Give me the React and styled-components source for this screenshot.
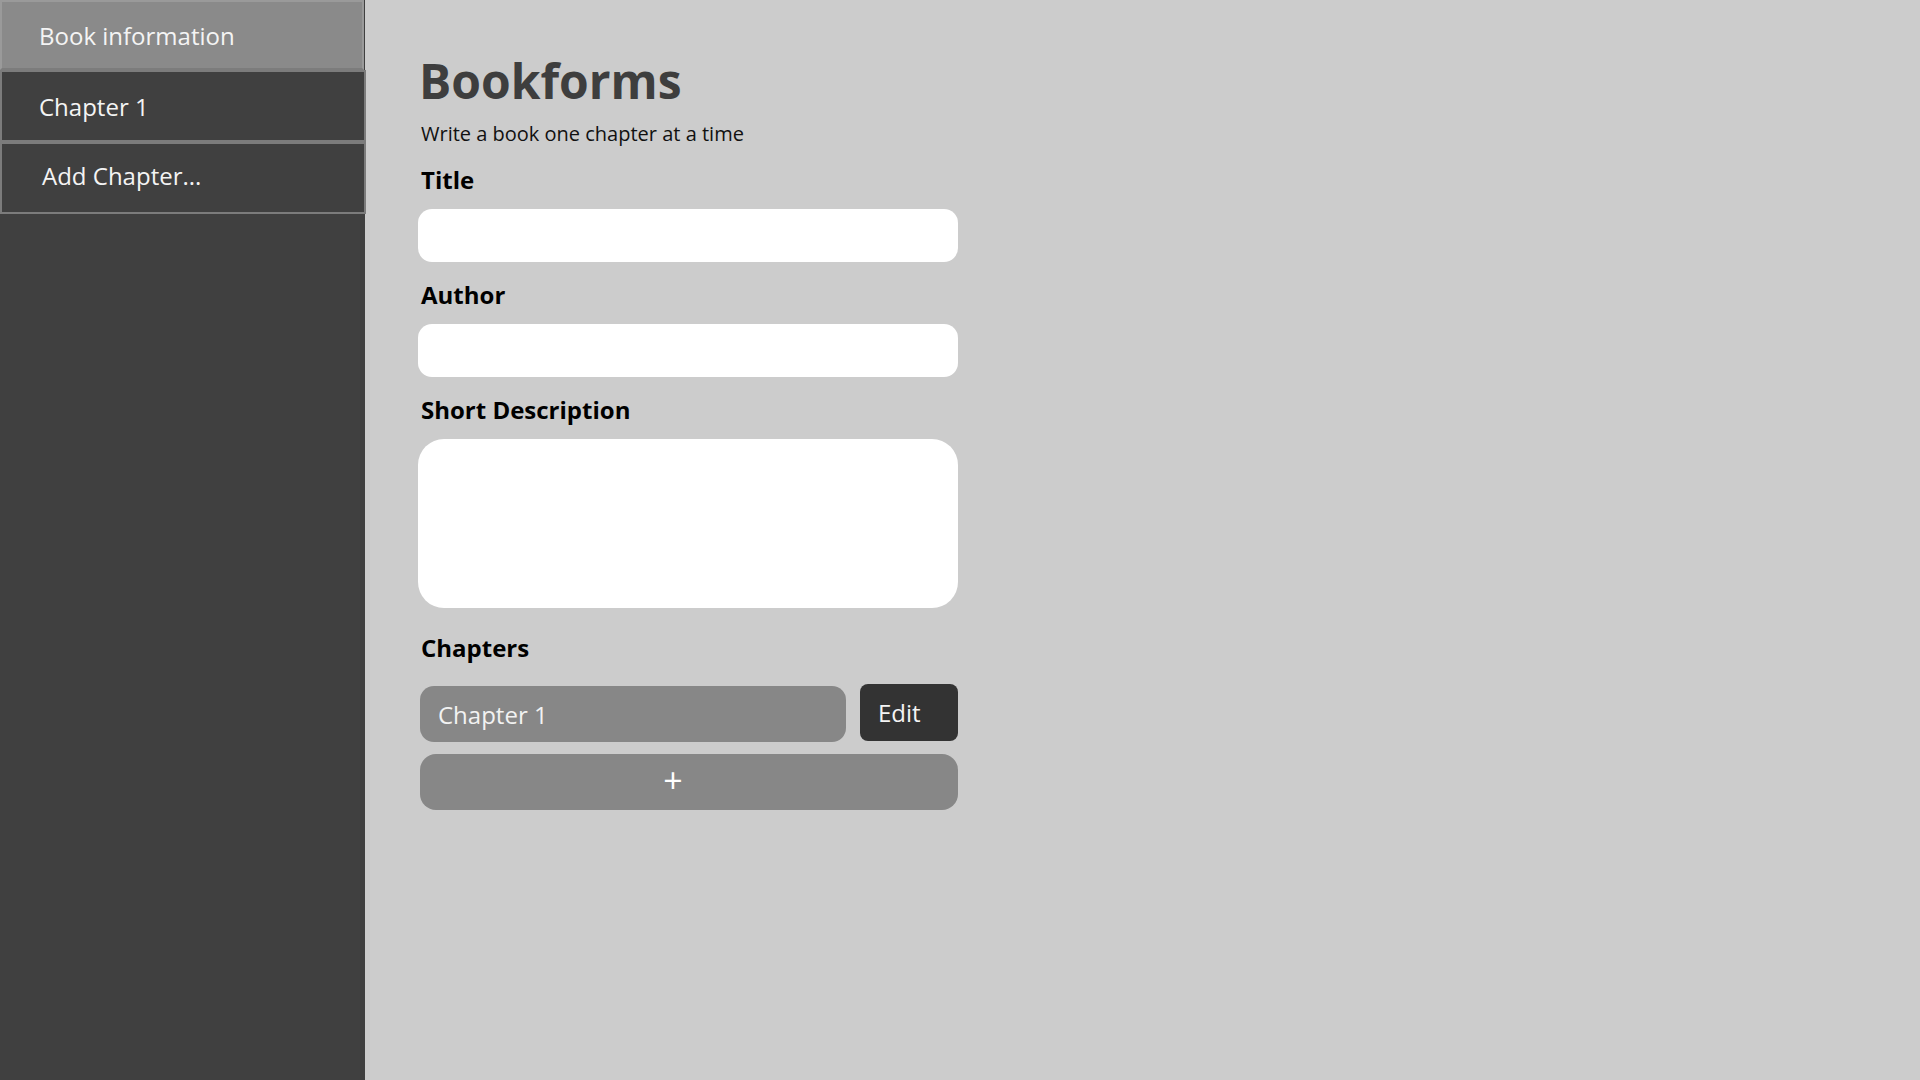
import styled, { createGlobalStyle } from "styled-components";

const GlobalStyle = createGlobalStyle`
  html, body {
    margin: 0;
    padding: 0;
    height: 100%;
  }
  body {
    font-family: "Open Sans", "Noto Sans", sans-serif;
    background-color: #cccccc;
  }
  * {
    box-sizing: border-box;
  }
`;

const Layout = styled.div`
  display: flex;
  width: 100%;
  min-height: 100vh;
`;

const Sidebar = styled.nav`
  width: 365px;
  flex-shrink: 0;
  background-color: #404040;
  display: flex;
  flex-direction: column;
`;

const NavItem = styled.button`
  display: flex;
  align-items: center;
  width: ${(p) => (p.$active ? "364px" : "366px")};
  height: ${(p) => (p.$active ? "70px" : "72px")};
  padding: 0 0 ${(p) => p.$lift || 0}px ${(p) => p.$indent || 37}px;
  margin: 0;
  border: 2px solid ${(p) => (p.$active ? "#9a9a9a" : "#7c7c7c")};
  border-bottom-color: #7c7c7c;
  background-color: ${(p) => (p.$active ? "#8a8a8a" : "#404040")};
  color: #f4f4f4;
  font-family: "Open Sans", sans-serif;
  font-size: 24px;
  text-align: left;
  cursor: pointer;
`;

const Main = styled.main`
  flex: 1;
  padding: 49px 0 0 53px;
`;

const Form = styled.form`
  width: 540px;
  display: flex;
  flex-direction: column;
`;

const Heading = styled.h1`
  margin: 0 0 7px 1px;
  font-size: 48px;
  line-height: 64px;
  font-weight: 700;
  color: #3e3e3e;
`;

const Subtitle = styled.p`
  margin: 0 0 16px 3px;
  font-size: 20px;
  line-height: 28px;
  color: #111111;
`;

const Label = styled.label`
  display: block;
  margin: 0 0 13px 3px;
  font-size: 24px;
  line-height: 32px;
  font-weight: 700;
  color: #000000;
`;

const TextInput = styled.input`
  width: 540px;
  height: 53px;
  border: none;
  border-radius: 14px;
  background-color: #ffffff;
  padding: 0 16px;
  font-family: "Open Sans", sans-serif;
  font-size: 20px;
  margin-bottom: 17px;
  outline: none;
`;

const TextArea = styled.textarea`
  width: 540px;
  height: 169px;
  border: none;
  border-radius: 26px;
  background-color: #ffffff;
  padding: 16px;
  font-family: "Open Sans", sans-serif;
  font-size: 20px;
  resize: none;
  margin-bottom: 24px;
  outline: none;
`;

const ChapterLabel = styled(Label)`
  margin-bottom: 22px;
`;

const ChapterRow = styled.div`
  display: flex;
  align-items: center;
  gap: 14px;
  margin-left: 2px;
  margin-bottom: 12px;
`;

const ChapterName = styled.div`
  width: 426px;
  height: 56px;
  display: flex;
  align-items: center;
  padding-left: 18px;
  border-radius: 14px;
  background-color: #878787;
  color: #f2f2f2;
  font-size: 24px;
`;

const EditButton = styled.button`
  width: 98px;
  height: 57px;
  margin-top: -3px;
  border: none;
  border-radius: 8px;
  background-color: #333333;
  color: #f4f4f4;
  font-family: "Open Sans", sans-serif;
  font-size: 24px;
  text-align: left;
  padding-left: 18px;
  cursor: pointer;
`;

const AddButton = styled.button`
  width: 538px;
  height: 56px;
  margin-left: 2px;
  border: none;
  border-radius: 16px;
  background-color: #878787;
  color: #ffffff;
  font-family: "Open Sans", sans-serif;
  font-size: 34px;
  line-height: 1;
  padding: 0 32px 4px 0;
  cursor: pointer;
`;

export default function App() {
  return (
    <>
      <GlobalStyle />
      <Layout>
        <Sidebar>
          <NavItem $active>Book information</NavItem>
          <NavItem>Chapter 1</NavItem>
          <NavItem $indent={40} $lift={5}>
            Add Chapter...
          </NavItem>
        </Sidebar>
        <Main>
          <Form onSubmit={(e) => e.preventDefault()}>
            <Heading>Bookforms</Heading>
            <Subtitle>Write a book one chapter at a time</Subtitle>
            <Label htmlFor="title">Title</Label>
            <TextInput id="title" type="text" />
            <Label htmlFor="author">Author</Label>
            <TextInput id="author" type="text" />
            <Label htmlFor="description">Short Description</Label>
            <TextArea id="description" />
            <ChapterLabel>Chapters</ChapterLabel>
            <ChapterRow>
              <ChapterName>Chapter 1</ChapterName>
              <EditButton type="button">Edit</EditButton>
            </ChapterRow>
            <AddButton type="button">+</AddButton>
          </Form>
        </Main>
      </Layout>
    </>
  );
}
